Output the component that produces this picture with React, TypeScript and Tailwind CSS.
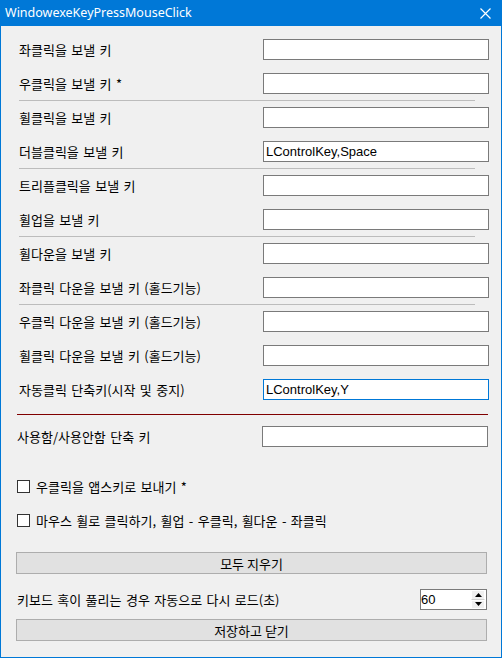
import React from "react";

const KR = "font-['Noto_Sans_CJK_KR','Liberation_Sans',sans-serif] [word-spacing:1.5px]";

function KeyRow({ label, value = "", focused = false, first = false }: { label: string; value?: string; focused?: boolean; first?: boolean }) {
  return (
    <div className={`flex items-center h-[21px] ${first ? "" : "mt-[13px]"}`}>
      <span className="flex-1 pl-[18px] text-[13px] leading-none text-black">{label}</span>
      <div
        className={`w-[226px] h-[21px] bg-white border flex items-center pl-[2px] font-['Liberation_Sans',sans-serif] [word-spacing:0px] text-[13px] leading-none text-black ${
          focused ? "border-[#0078d7]" : "border-[#7a7a7a]"
        }`}
      >
        {value}
      </div>
    </div>
  );
}

function Sep() {
  return <div className="ml-[18px] mr-[14px] mt-[6px] mb-[6px] h-px bg-[#bcbcbc]" />;
}

function Check({ label, className = "" }: { label: string; className?: string }) {
  return (
    <div className={`flex items-center h-[13px] pl-[16px] ${className}`}>
      <div className="w-[13px] h-[13px] border border-[#333333] bg-white" />
      <span className="ml-[6px] text-[13px] leading-none text-black">{label}</span>
    </div>
  );
}

export default function App() {
  return (
    <div className={`w-[502px] h-[658px] flex flex-col bg-[#f0f0f0] border-x border-b border-[#0078d7] ${KR}`}>
      {/* Title bar */}
      <div className="h-[26px] -mx-px bg-[#0078d7] flex items-center justify-between pl-[5px] pr-[11px] shrink-0 [word-spacing:0px]">
        <span className="font-['Noto_Sans',sans-serif] text-[12.5px] text-white leading-none">WindowexeKeyPressMouseClick</span>
        <svg width="11" height="11" viewBox="0 0 11 11">
          <path d="M0.5 0.5 L10.5 10.5 M10.5 0.5 L0.5 10.5" stroke="white" strokeWidth="1.2" />
        </svg>
      </div>

      {/* Body */}
      <div className="flex flex-col pt-[13px] pr-[12px]">
        <KeyRow first label="좌클릭을 보낼 키" />
        <KeyRow label="우클릭을 보낼 키 *" />
        <Sep />
        <KeyRow first label="휠클릭을 보낼 키" />
        <KeyRow label="더블클릭을 보낼 키" value="LControlKey,Space" />
        <Sep />
        <KeyRow first label="트리플클릭을 보낼 키" />
        <KeyRow label="휠업을 보낼 키" />
        <Sep />
        <KeyRow first label="휠다운을 보낼 키" />
        <KeyRow label="좌클릭 다운을 보낼 키 (홀드기능)" />
        <Sep />
        <KeyRow first label="우클릭 다운을 보낼 키 (홀드기능)" />
        <KeyRow label="휠클릭 다운을 보낼 키 (홀드기능)" />
        <KeyRow label="자동클릭 단축키(시작 및 중지)" value="LControlKey,Y" focused />
      </div>

      <div className="mt-[14px] ml-[16px] mr-[13px] h-px bg-[#800000]" />

      <div className="flex items-center h-[21px] mt-[11px] pr-[13px]">
        <span className="flex-1 pl-[16px] text-[13px] leading-none text-black">사용함/사용안함 단축 키</span>
        <div className="w-[226px] h-[21px] bg-white border border-[#7a7a7a]" />
      </div>

      <Check className="mt-[33px]" label="우클릭을 앱스키로 보내기 *" />
      <Check className="mt-[21px]" label="마우스 휠로 클릭하기, 휠업 - 우클릭, 휠다운 - 좌클릭" />

      <button className="mt-[25px] ml-[15px] mr-[14px] h-[22px] bg-[#e1e1e1] border border-[#adadad] text-[13px] leading-none text-black">
        모두 지우기
      </button>

      <div className="flex items-center h-[21px] mt-[15px] pl-[16px] pr-[14px]">
        <span className="flex-1 text-[13px] leading-none text-black">키보드 혹이 풀리는 경우 자동으로 다시 로드(초)</span>
        <div className="w-[67px] h-[21px] bg-white border border-[#7a7a7a] flex items-center">
          <span className="flex-1 font-['Liberation_Sans',sans-serif] text-[13px] leading-none text-black">60</span>
          <div className="w-[14px] h-[19px] mr-[1px] flex flex-col bg-[#f0f0f0]">
            <div className="flex-1 flex items-center justify-center border border-white border-b-[#d0d0d0]">
              <svg width="7" height="4" viewBox="0 0 7 4"><path d="M3.5 0 L7 4 L0 4 Z" fill="black" /></svg>
            </div>
            <div className="flex-1 flex items-center justify-center border border-white">
              <svg width="7" height="4" viewBox="0 0 7 4"><path d="M0 0 L7 0 L3.5 4 Z" fill="black" /></svg>
            </div>
          </div>
        </div>
      </div>

      <button className="mt-[9px] ml-[15px] mr-[14px] h-[22px] bg-[#e1e1e1] border border-[#adadad] text-[13px] leading-none text-black">
        저장하고 닫기
      </button>
    </div>
  );
}
